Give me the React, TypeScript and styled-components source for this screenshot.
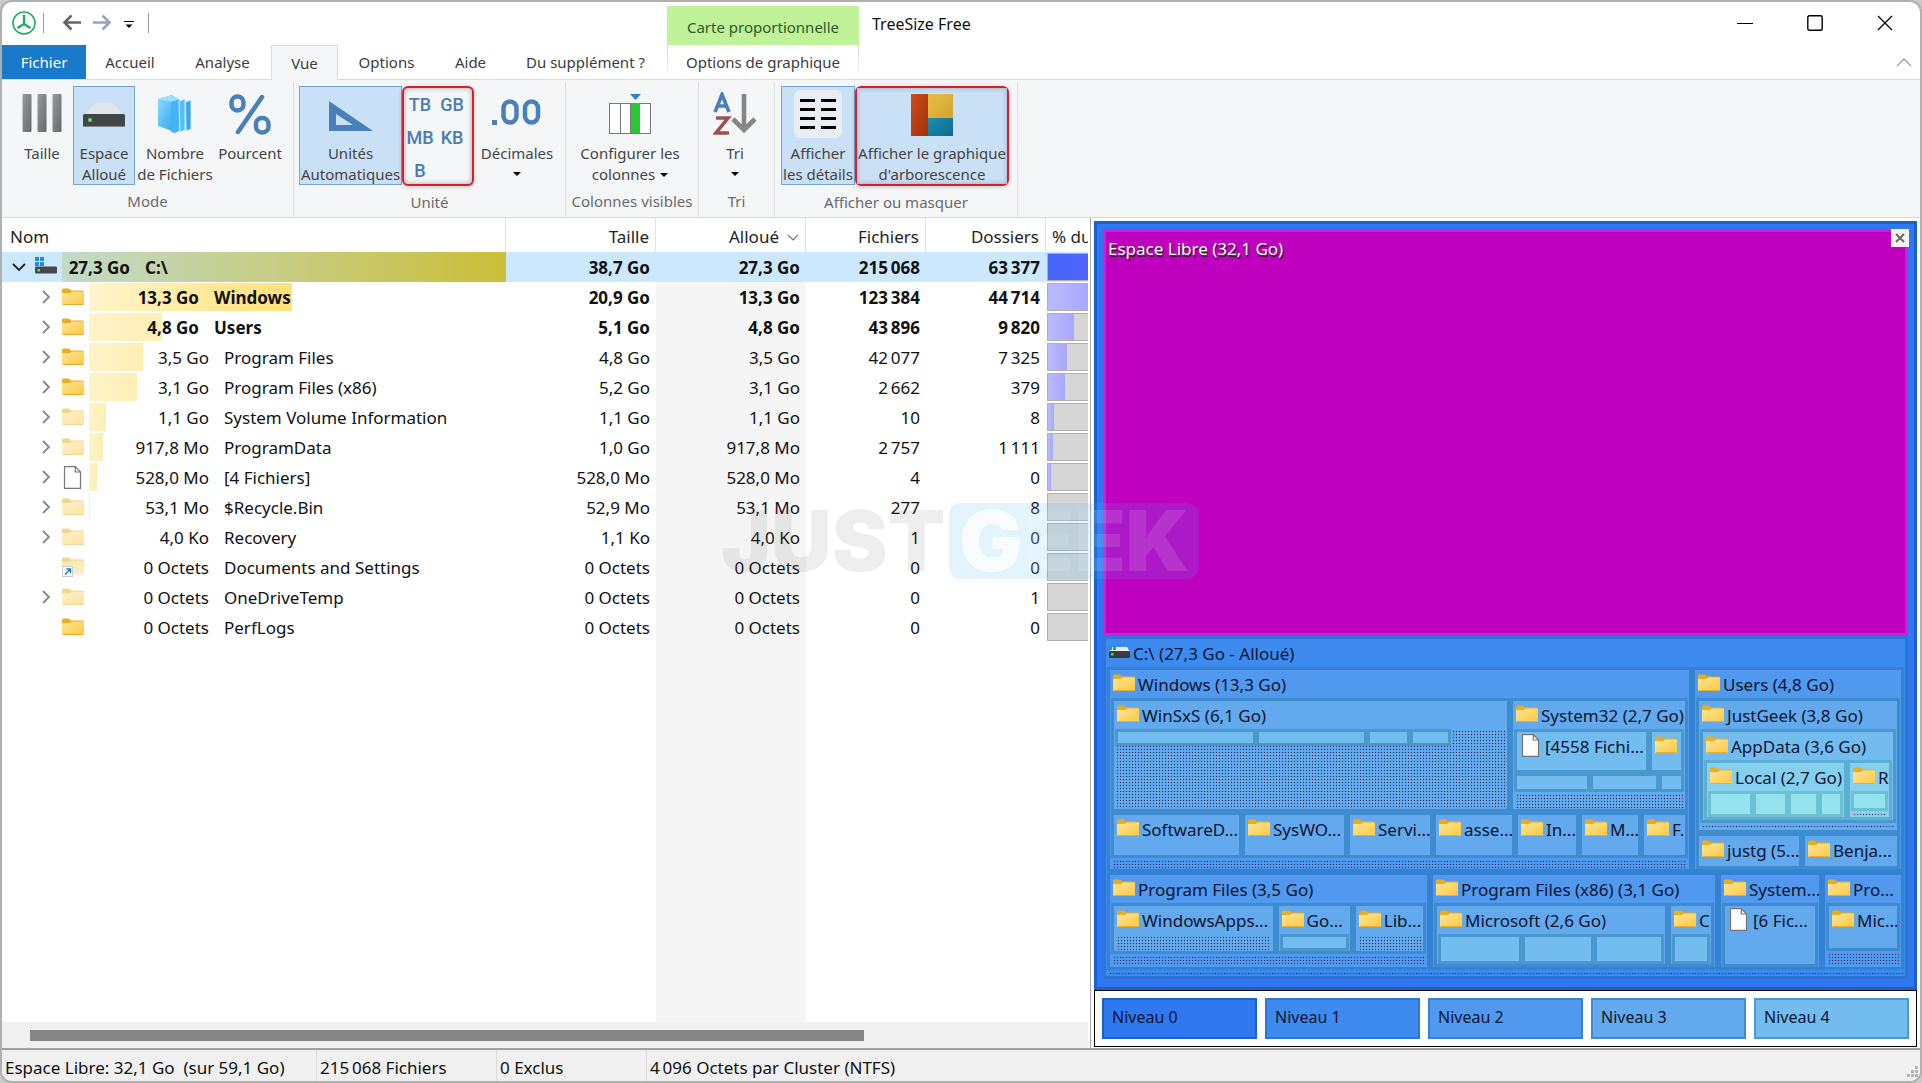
import React from "react";
import styled, { createGlobalStyle, css } from "styled-components";

const FONT = '"Noto Sans", "Open Sans", sans-serif';

const Global = createGlobalStyle`
  *, *::before, *::after { box-sizing: border-box; }
  body { margin: 0; background: #c6cacd; font-family: ${FONT}; color: #111; }
  button { font: inherit; color: inherit; background: none; border: 0; padding: 0; margin: 0; }
  svg { display: block; flex: none; }
`;

/* ---------- window ---------- */

const Window = styled.div`
  position: relative;
  display: flex;
  flex-direction: column;
  min-height: 100vh;
  border: 2px solid #b0b0b0;
  border-radius: 12px;
  background: #fff;
  overflow: hidden;
`;

const Top = styled.header`
  display: grid;
  grid-template-columns: 665px 192px minmax(0, 1fr);
  grid-template-rows: 43px 34px;
  border-bottom: 1px solid #dadbdc;
`;

const QuickAccess = styled.div`
  display: flex;
  align-items: center;
  padding: 0 10px 2px;
`;

const QuickButton = styled.button<{ $narrow?: boolean }>`
  display: grid;
  place-items: center;
  width: ${(p) => (p.$narrow ? 24 : 30)}px;
  height: 24px;
`;

const QuickRule = styled.span<{ $wide?: boolean }>`
  width: 1px;
  height: 20px;
  margin: 0 ${(p) => (p.$wide ? 13 : 7)}px 0 7px;
  background: #9a9a9a;
`;

const ContextTitle = styled.div`
  margin-top: 4px;
  background: #bff299;
  color: #2f5a2b;
  font-size: 15px;
  line-height: 42px;
  text-align: center;
`;

const TitleArea = styled.div`
  display: flex;
  justify-content: space-between;
  padding: 0 0 0 13px;
`;

const Title = styled.h1`
  margin: 0;
  font-size: 16px;
  font-weight: 400;
  line-height: 44px;
`;

const WindowButtons = styled.div`
  display: flex;
`;

const WindowButton = styled.button`
  display: grid;
  place-items: center;
  width: 70px;
  height: 42px;
`;

const Tabs = styled.nav`
  display: flex;
`;

const Tab = styled.button<{ $w: number; $kind?: "file" | "active" }>`
  flex: none;
  width: ${(p) => p.$w}px;
  height: 34px;
  font-size: 15px;
  color: #3c3c3c;
  white-space: nowrap;
  ${(p) => p.$kind === "file" && css`background: #1979ca; color: #fff;`}
  ${(p) =>
    p.$kind === "active" &&
    css`
      height: 35px;
      background: #f4f6f8;
      border: 1px solid #dadbdc;
      border-bottom: 0;
    `}
`;

const ContextTab = styled.button`
  font-size: 15px;
  color: #3c3c3c;
  border: solid #dadbdc;
  border-width: 0 1px;
  border-image: linear-gradient(#cfcfcf, #fff) 1;
`;

const Collapse = styled.button`
  justify-self: end;
  align-self: center;
  margin-right: 8px;
`;

/* ---------- ribbon ---------- */

const Ribbon = styled.div`
  display: flex;
  height: 138px;
  padding-top: 2px;
  background: #f4f6f8;
  border-bottom: 1px solid #d6d7d8;
`;

const Group = styled.section<{ $w: number }>`
  flex: none;
  display: flex;
  flex-direction: column;
  width: ${(p) => p.$w}px;
  border-right: 1px solid #dfe0e2;
`;

const GroupButtons = styled.div<{ $pad?: number }>`
  display: flex;
  height: 105px;
  padding: 4px 0 0 ${(p) => p.$pad || 0}px;
`;

const GroupLabel = styled.div`
  font-size: 15px;
  line-height: 32px;
  text-align: center;
  color: #6a6a6a;
  white-space: nowrap;
`;

const RibbonButton = styled.button<{ $w: number; $on?: boolean }>`
  flex: none;
  display: flex;
  flex-direction: column;
  align-items: center;
  width: ${(p) => p.$w}px;
  height: 99px;
  font-size: 15px;
  line-height: 21px;
  color: #444;
  white-space: nowrap;
  border: 1px solid ${(p) => (p.$on ? "#74a3d6" : "transparent")};
  background: ${(p) => (p.$on ? "#cae0f7" : "transparent")};
`;

const IconSlot = styled.span`
  display: grid;
  place-items: center;
  flex: none;
  height: 56px;
  padding-bottom: 2px;
`;

const Line = styled.span`
  display: flex;
  align-items: center;
  justify-content: center;
  gap: 5px;
  height: 21px;
`;

const Highlight = styled.div<{ $w: number }>`
  flex: none;
  width: ${(p) => p.$w}px;
  height: 100px;
  border: 2px solid #d6202c;
  border-radius: 6px;
  box-shadow: inset 0 0 5px rgba(0, 0, 0, 0.35), 0 1px 4px rgba(0, 0, 0, 0.2);
  & > button { width: 100%; height: 96px; border: 0; box-shadow: inset 0 0 5px rgba(0, 0, 0, 0.25); }
  & > button > ${IconSlot} { height: 55px; }
`;

const Units = styled.div`
  display: grid;
  grid-template-columns: 32px 32px;
  grid-auto-rows: 33px;
  justify-items: center;
  font: 500 18px/30px Roboto, sans-serif;
`;

const UnitButton = styled.button`
  color: #4a7db4;
`;

/* ---------- body ---------- */

const Main = styled.main`
  flex: 1;
  display: grid;
  grid-template-columns: minmax(0, 1089fr) minmax(0, 823fr);
  padding-right: 3px;
  column-gap: 3px;
`;

const Left = styled.section`
  display: flex;
  flex-direction: column;
  min-width: 0;
  padding-right: 2px;
  border-right: 1px solid #a9a9ae;
`;

const ListWrap = styled.div`
  flex: 1;
  display: flex;
  flex-direction: column;
  overflow: hidden;
`;

const List = styled.table`
  width: 100%;
  table-layout: fixed;
  border-collapse: separate;
  border-spacing: 0;
  font-size: 17px;
  line-height: 24px;
  white-space: nowrap;
`;

const Head = styled.th<{ $left?: boolean }>`
  height: 34px;
  padding: 4px 6px 0 ${(p) => (p.$left ? 8 : 6)}px;
  font-size: 17px;
  font-weight: 400;
  color: #222;
  overflow: hidden;
  text-align: ${(p) => (p.$left ? "left" : "right")};
  border-right: 1px solid #e2e2e2;
  &:last-child { border-right: 0; padding: 4px 0 0 6px; }
  svg { display: inline-block; margin-left: 8px; vertical-align: middle; }
`;

const Row = styled.tr<{ $bold?: boolean; $sel?: boolean }>`
  font-weight: ${(p) => (p.$bold ? 700 : 400)};
  background: ${(p) => (p.$sel ? "#cce8ff" : "transparent")};
`;

const Cell = styled.td<{ $sorted?: boolean }>`
  height: 30px;
  padding: 2px 6px 0;
  text-align: right;
  background: ${(p) => (p.$sorted ? "#f5f5f5" : "transparent")};
`;

const NameCell = styled.td`
  height: 30px;
  padding: 0;
`;

const NameFlow = styled.div<{ $child?: boolean }>`
  display: flex;
  align-items: center;
  height: 30px;
  padding-left: ${(p) => (p.$child ? 36 : 10)}px;
`;

const Twisty = styled.span<{ $child?: boolean }>`
  width: ${(p) => (p.$child ? 24 : 22)}px;
  display: flex;
  svg { width: 14px; }
`;

const IconBox = styled.span<{ $child?: boolean }>`
  width: 26px;
  margin-left: ${(p) => (p.$child ? 0 : 1)}px;
  flex: none;
`;

const BarArea = styled.span<{ $root?: boolean }>`
  flex: 1;
  display: grid;
  align-items: center;
  height: ${(p) => (p.$root ? 30 : 28)}px;
  margin-left: 1px;
  & > * { grid-area: 1 / 1; }
`;

const SizeBar = styled.span<{ $root?: boolean }>`
  height: 100%;
  background: ${(p) =>
    p.$root
      ? "linear-gradient(90deg, #c2dacb, #cbbf37)"
      : "linear-gradient(90deg, #fff4c8, #fdeeb4)"};
`;

const WideBar = styled(SizeBar)`
  background: linear-gradient(90deg, #fff5cc, #ffe177);
`;

const NameText = styled.span<{ $size: number }>`
  display: grid;
  grid-template-columns: ${(p) => p.$size}px auto;
  justify-content: start;
  column-gap: 15px;
  padding-top: 2px;
  & > :first-child { text-align: right; }
`;

const PercentCell = styled.td`
  height: 30px;
  padding: 1px 0 1px 1px;
`;

const Percent = styled.div<{ $sel?: boolean }>`
  height: 28px;
  overflow: hidden;
  border: 1px solid #b0b0b0;
  border-right: 0;
  background: #d6d6d6;
  & > span {
    display: block;
    height: 100%;
    background: ${(p) =>
      p.$sel
        ? "linear-gradient(90deg, #4466f8, #5064fb)"
        : "linear-gradient(90deg, #bcbafd, #a9a7fb)"};
  }
`;

const Filler = styled.div`
  flex: 1;
  display: grid;
  grid-template-columns: minmax(0, 1fr) 150px 282px;
  & > span { background: #f5f5f5; }
`;

const ScrollTrack = styled.div`
  height: 26px;
  padding: 8px 224px 8px 28px;
  background: #f0f0f0;
`;

const ScrollThumb = styled.div`
  height: 11px;
  background: #868686;
`;

/* ---------- treemap ---------- */

const FILLS = ["#2f78f0", "#3e8bf0", "#5099ee", "#62a9ee", "#72bcef", "#84d0ee", "#94e2f0"];
const EDGES = ["#1a60cf", "#2b76d6", "#3581d2", "#3f8bd0", "#4b98cf", "#5caed2", "#6cc0d2"];

/* A cell's two 3px borders count towards its share, so they are taken off the part that grows. */
const CELL_EDGES = 6;

const Right = styled.section`
  display: flex;
  flex-direction: column;
  min-width: 0;
  padding: 3px 0 1px;
`;

const MapRoot = styled.div`
  position: relative;
  flex: 1;
  display: flex;
  flex-direction: column;
  padding: 5px 6px 8px;
  border: 3px solid ${EDGES[0]};
  background: ${FILLS[0]};
`;

const CloseMap = styled.button`
  position: absolute;
  top: 5px;
  right: 5px;
  display: grid;
  place-items: center;
  width: 18px;
  height: 18px;
  background: #f3f3f3;
`;

const FreeSpace = styled.div`
  flex: 395 1 0;
  padding: 4px 2px 2px;
  border: 3px solid #cf1fdc;
  background: #bf00bf;
  color: #fff;
  font-size: 17px;
  line-height: 26px;
  text-shadow: 1px 2px 1px #222;
`;

const MapCell = styled.div<{ $level: number; $flex: number }>`
  flex: ${(p) => Math.max(1, p.$flex - CELL_EDGES)} 1 0;
  display: flex;
  flex-direction: column;
  min-width: 0;
  min-height: 0;
  overflow: hidden;
  border: 3px solid ${(p) => EDGES[p.$level]};
  background: ${(p) => FILLS[p.$level]};
`;

const MapLabel = styled.div`
  flex: none;
  display: flex;
  align-items: center;
  gap: 3px;
  height: 28px;
  padding: 2px 0 0 3px;
  overflow: hidden;
  color: #0b1530;
  font-size: 17px;
  line-height: 28px;
  white-space: nowrap;
  svg { margin-top: -4px; }
`;

const MapBody = styled.div`
  flex: 1;
  display: flex;
  flex-direction: column;
  min-height: 0;
  padding: 0 1px;
`;

const MapRow = styled.div<{ $flex: number; $end?: number }>`
  flex: ${(p) => p.$flex} 1 0;
  display: flex;
  min-height: 0;
  padding-right: ${(p) => p.$end || 0}%;
`;

/* One dark pixel in each 3px tile. */
const dots = css`
  background-image: conic-gradient(from 90deg at 2px 2px, #0c1c3c 90deg, transparent 0);
  background-size: 3px 3px;
`;

const Dots = styled.div<{ $flex: number }>`
  flex: ${(p) => p.$flex} 1 0;
  margin: 1px;
  min-height: 0;
  ${dots}
`;

const DotBody = styled(MapBody)`
  margin: 0 1px;
  padding: 0;
  ${dots}
`;

const Legend = styled.div`
  display: flex;
  gap: 8px;
  padding: 7px;
  border: 1px solid #000;
  background: #fff;
`;

const LegendItem = styled.div<{ $level: number }>`
  flex: 1;
  height: 41px;
  padding-left: 8px;
  border: 2px solid ${(p) => EDGES[p.$level]};
  background: ${(p) => FILLS[p.$level]};
  color: #0b1530;
  font-size: 16px;
  line-height: 34px;
`;

/* ---------- status ---------- */

const Status = styled.footer`
  display: flex;
  height: 33px;
  border-top: 2px solid #a0a0a0;
  background: #f0f0f0;
  font-size: 17px;
  line-height: 35px;
  white-space: pre;
`;

const StatusItem = styled.div<{ $w?: number }>`
  flex: ${(p) => (p.$w ? "none" : "1")};
  width: ${(p) => (p.$w ? `${p.$w}px` : "auto")};
  padding-left: 3px;
  border-right: 1px solid #dcdcdc;
  &:last-of-type { border: 0; }
`;

const Grip = styled.span`
  align-self: flex-end;
  padding: 0 1px 3px 0;
`;

const Watermark = styled.div`
  position: absolute;
  left: 50%;
  top: 501px;
  display: flex;
  align-items: center;
  gap: 4px;
  margin-left: -240px;
  height: 76px;
  font: 900 84px/76px Inter, sans-serif;
  color: rgba(90, 90, 90, 0.1);
  pointer-events: none;
`;

const WatermarkBox = styled.span`
  padding: 0 10px;
  border-radius: 12px;
  background: rgba(60, 180, 240, 0.14);
  color: rgba(255, 255, 255, 0.75);
  span { color: rgba(255, 255, 255, 0.12); }
`;

/* ---------- icons ---------- */

const Folder = ({ faded }: { faded?: boolean }) => (
  <svg width="22" height="18" viewBox="0 0 22 18" opacity={faded ? 0.5 : 1}>
    <defs>
      <linearGradient id="folder" x1="0" y1="0" x2="1" y2="1">
        <stop offset="0" stopColor="#ffe596" />
        <stop offset="1" stopColor="#fdc842" />
      </linearGradient>
    </defs>
    <path d="M0 2a1.500 1.500 0 0 1 1.500-1.500H7l2 2h11.500a1.500 1.500 0 0 1 1.500 1.500V8H0z" fill="#e9ad22" />
    <path d="M0 5h8l2-1.500h12V16a1 1 0 0 1-1 1H1a1 1 0 0 1-1-1z" fill="url(#folder)" />
    <path d="M1 16.500h20" stroke="#e2ac35" />
  </svg>
);

const ShortcutFolder = () => (
  <svg width="22" height="20" viewBox="0 0 22 20">
    <g opacity=".5">
      <path d="M0 2a1.500 1.500 0 0 1 1.500-1.500H7l2 2h11.500a1.500 1.500 0 0 1 1.500 1.500V8H0z" fill="#e9ad22" />
      <path d="M0 5h8l2-1.500h12V17H0z" fill="#fdd973" />
    </g>
    <rect x="0.500" y="9.500" width="10" height="10" fill="#fff" stroke="#ccc" />
    <path d="M3 17.500l5-5M4.500 12H8.500V16" stroke="#1a7fc8" strokeWidth="1.500" fill="none" />
  </svg>
);

const Page = () => (
  <svg width="22" height="23" viewBox="0 0 22 23">
    <path d="M2.500.7h10.800L18.500 6v16.300h-16z" fill="#fdfdfd" stroke="#777" strokeWidth="1.200" />
    <path d="M13.300.7V6h5.200" fill="none" stroke="#777" strokeWidth="1.200" />
  </svg>
);

const Drive = () => (
  <svg width="22" height="20" viewBox="0 0 22 20">
    <path d="M0 0h4v4H0zM5 0h4v4H5zM0 5h4v4H0zM5 5h4v4H5z" fill="#2090dc" />
    <path d="M11 7.500h7l3 2.500H9z" fill="#dbe6ee" />
    <rect y="9.500" width="22" height="7" rx="1" fill="#45484b" />
    <rect x="2.500" y="12" width="2.500" height="2.500" fill="#4fe06a" />
  </svg>
);

const MapDrive = () => (
  <svg width="21" height="16" viewBox="0 0 21 16">
    <path d="M3 3h15l3 5H0z" fill="#e8edf2" />
    <path d="M0 2h3v4H0zM4 0h3v6H4z" fill="#159bd8" />
    <rect y="7" width="21" height="7" rx="1" fill="#3a3d40" />
    <rect x="2" y="9" width="2.500" height="2.500" fill="#4fe06a" />
  </svg>
);

const Chevron = ({ open }: { open?: boolean }) => (
  <svg width="14" height="14" viewBox="0 0 14 14" fill="none" stroke={open ? "#222" : "#8a8a8a"} strokeWidth="1.900">
    <path d={open ? "M1 4l6 6 6-6" : "M5 1l6 6-6 6"} />
  </svg>
);

const Caret = () => (
  <svg width="8" height="4" viewBox="0 0 8 4"><path d="M0 0h8L4 4z" fill="#000" /></svg>
);

const Logo = () => (
  <svg width="24" height="24" viewBox="0 0 24 24" fill="none" stroke="#22ab62">
    <circle cx="12" cy="12" r="11" strokeWidth="1.600" />
    <path d="M12 4v9M12 13l-6.500 4M12 13l6.500 4" strokeWidth="2.400" />
  </svg>
);

const Arrow = ({ color, right }: { color: string; right?: boolean }) => (
  <svg width="20" height="17" viewBox="0 0 20 17" fill="none" stroke={color} strokeWidth="2.600">
    <path d={right ? "M1 8.500h16.500M10.500 1.500l7 7-7 7" : "M19 8.500H2.500M9.500 1.500l-7 7 7 7"} />
  </svg>
);

const BarsIcon = () => (
  <svg width="40" height="40" viewBox="0 0 40 40">
    <defs>
      <linearGradient id="bars" x2="1" y2="1"><stop stopColor="#9a9b9d" /><stop offset="1" stopColor="#66686b" /></linearGradient>
    </defs>
    {[0, 15, 30].map((x) => <rect key={x} x={x + 0.5} width="9" height="38" rx="1" fill="url(#bars)" />)}
  </svg>
);

const DriveIcon = () => (
  <svg width="42" height="38" viewBox="0 0 42 38">
    <path d="M9 11q2-3 12-3t12 3l6 9H3z" fill="#e2e6ea" />
    <rect y="19" width="42" height="13" rx="1.500" fill="#434648" />
    <path d="M1 31.500h40" stroke="#888" />
    <circle cx="7" cy="25" r="2" fill="#5fe27a" />
  </svg>
);

const BooksIcon = () => (
  <svg width="34" height="40" viewBox="0 0 34 40">
    <defs>
      <linearGradient id="book" x2="1" y2="1"><stop stopColor="#8fdcff" /><stop offset="1" stopColor="#2fa6ee" /></linearGradient>
    </defs>
    <path d="M0 5L14 1l3 3v34l-17-6z" fill="url(#book)" />
    <path d="M13 8l8-3v32l-4 2-4-1z" fill="#45b4f2" />
    <path d="M21 7l6-2v31l-5 2z" fill="#56bdf5" stroke="#c5ebff" />
    <path d="M27.500 8l5.500-2v29l-5 2z" fill="#3da6e6" stroke="#c5ebff" />
    <path d="M14 1l7 4-8 3-13-3z" fill="#9be0ff" />
  </svg>
);

const PercentIcon = () => (
  <svg width="42" height="41" viewBox="0 0 42 41" fill="none" stroke="#4a7fb8" strokeWidth="4.500">
    <rect x="2.500" y="2.500" width="12" height="14" rx="6" />
    <rect x="27" y="24" width="12.500" height="14.500" rx="6" />
    <path d="M33 3L9 38" strokeLinecap="round" />
  </svg>
);

const SquareIcon = () => (
  <svg width="46" height="36" viewBox="0 0 46 36">
    <path d="M1 5v30h44zM8 18l17 11H8z" fill="#4a80ba" fillRule="evenodd" />
  </svg>
);

const DecimalsIcon = () => (
  <svg width="50" height="30" viewBox="0 0 50 30" fill="none" stroke="#4a80ba" strokeWidth="4.500">
    <rect x="11.500" y="2.500" width="13" height="21" rx="6.500" />
    <rect x="33" y="2.500" width="13" height="21" rx="6.500" />
    <rect x="0" y="21" width="5" height="5" fill="#4a80ba" stroke="none" />
  </svg>
);

const ColumnsIcon = () => (
  <svg width="42" height="40" viewBox="0 0 42 40">
    <path d="M21 0h11l-5.500 6z" fill="#2f80c8" />
    <rect x=".5" y="9.500" width="41" height="30" fill="#fff" stroke="#777" />
    <path d="M11.500 10v29M30.500 10v29M21.500 10v29" stroke="#777" />
    <rect x="22" y="9" width="9" height="30" fill="#27c832" />
  </svg>
);

const SortIcon = () => (
  <svg width="44" height="44" viewBox="0 0 44 44" fill="none" strokeWidth="3.600">
    <path d="M2 20L9 2.500 16 20M4.500 14h9" stroke="#4a7fb8" />
    <path d="M3 26h12L3 41h13" stroke="#9c5252" />
    <path d="M31 2v34M20 27l11 11 11-11" stroke="#868686" strokeWidth="4.600" />
  </svg>
);

const DetailsIcon = () => (
  <svg width="48" height="48" viewBox="0 0 48 48">
    <rect width="48" height="48" rx="6" fill="#e9eef5" />
    <path d="M6 10.500h15M27 10.500h15M6 19.500h15M27 19.500h15M6 28.500h15M27 28.500h15M6 37.500h15M27 37.500h15" stroke="#000" strokeWidth="3" />
  </svg>
);

const TreemapIcon = () => (
  <svg width="42" height="42" viewBox="0 0 42 42">
    <defs>
      <linearGradient id="tmr" x2="1" y2="1"><stop stopColor="#cf4a1c" /><stop offset="1" stopColor="#a3300a" /></linearGradient>
      <linearGradient id="tmy" x2="1" y2="1"><stop stopColor="#e8bc48" /><stop offset="1" stopColor="#d3a52c" /></linearGradient>
      <linearGradient id="tmb" x2="1" y2="1"><stop stopColor="#1d8fae" /><stop offset="1" stopColor="#0d6a90" /></linearGradient>
    </defs>
    <rect width="17" height="42" fill="url(#tmr)" />
    <rect x="17" width="25" height="24" fill="url(#tmy)" />
    <rect x="17" y="24" width="25" height="18" fill="url(#tmb)" />
  </svg>
);

/* ---------- data ---------- */

type Item = {
  name: string;
  size: string;
  total: string;
  files: string;
  dirs: string;
  share: number;
  icon?: "root" | "folder" | "faded" | "page" | "link";
  leaf?: boolean;
};

const T = "\u2009";

const items: Item[] = [
  { name: "C:\\", size: "27,3 Go", total: "38,7 Go", files: `215${T}068`, dirs: `63${T}377`, share: 100, icon: "root" },
  { name: "Windows", size: "13,3 Go", total: "20,9 Go", files: `123${T}384`, dirs: `44${T}714`, share: 48.7 },
  { name: "Users", size: "4,8 Go", total: "5,1 Go", files: `43${T}896`, dirs: `9${T}820`, share: 17.6 },
  { name: "Program Files", size: "3,5 Go", total: "4,8 Go", files: `42${T}077`, dirs: `7${T}325`, share: 12.9 },
  { name: "Program Files (x86)", size: "3,1 Go", total: "5,2 Go", files: `2${T}662`, dirs: "379", share: 11.4 },
  { name: "System Volume Information", size: "1,1 Go", total: "1,1 Go", files: "10", dirs: "8", share: 4, icon: "faded" },
  { name: "ProgramData", size: "917,8 Mo", total: "1,0 Go", files: `2${T}757`, dirs: `1${T}111`, share: 3.3, icon: "faded" },
  { name: "[4 Fichiers]", size: "528,0 Mo", total: "528,0 Mo", files: "4", dirs: "0", share: 1.9, icon: "page" },
  { name: "$Recycle.Bin", size: "53,1 Mo", total: "52,9 Mo", files: "277", dirs: "8", share: 0.2, icon: "faded" },
  { name: "Recovery", size: "4,0 Ko", total: "1,1 Ko", files: "1", dirs: "0", share: 0, icon: "faded" },
  { name: "Documents and Settings", size: "0 Octets", total: "0 Octets", files: "0", dirs: "0", share: 0, icon: "link", leaf: true },
  { name: "OneDriveTemp", size: "0 Octets", total: "0 Octets", files: "0", dirs: "1", share: 0, icon: "faded" },
  { name: "PerfLogs", size: "0 Octets", total: "0 Octets", files: "0", dirs: "0", share: 0, leaf: true },
];

const rowIcon = (kind: Item["icon"]) => {
  if (kind === "root") return <Drive />;
  if (kind === "page") return <Page />;
  if (kind === "link") return <ShortcutFolder />;
  return <Folder faded={kind === "faded"} />;
};

const ItemRow = ({ item, index }: { item: Item; index: number }) => {
  const root = index === 0;
  const bold = index < 3;
  const Bar = index === 1 ? WideBar : SizeBar;
  return (
    <Row $bold={bold} $sel={root}>
      <NameCell>
        <NameFlow $child={!root}>
          <Twisty $child={!root}>{!item.leaf && <Chevron open={root} />}</Twisty>
          <IconBox $child={!root}>{rowIcon(item.icon)}</IconBox>
          <BarArea $root={root}>
            <Bar $root={root} style={{ width: `${item.share}%` }} />
            <NameText $size={root ? 68 : bold ? 110 : 120}>
              <span>{item.size}</span>
              <span>{item.name}</span>
            </NameText>
          </BarArea>
        </NameFlow>
      </NameCell>
      <Cell>{item.total}</Cell>
      <Cell $sorted={!root}>{item.size}</Cell>
      <Cell>{item.files}</Cell>
      <Cell>{item.dirs}</Cell>
      <PercentCell>
        <Percent $sel={root}>
          <span style={{ width: `${Math.min(100, item.share * 3.7)}%` }} />
        </Percent>
      </PercentCell>
    </Row>
  );
};

/* ---------- treemap parts ---------- */

type NodeProps = {
  level: number;
  flex: number;
  label?: string;
  page?: boolean;
  dotted?: boolean;
  children?: React.ReactNode;
};

const Node = ({ level, flex, label, page, dotted, children }: NodeProps) => {
  const Body = dotted ? DotBody : MapBody;
  return (
    <MapCell $level={level} $flex={flex}>
      {label && (
        <MapLabel>
          {page ? <Page /> : level === 1 ? <MapDrive /> : <Folder />}
          <span>{label}</span>
        </MapLabel>
      )}
      {children && <Body>{children}</Body>}
    </MapCell>
  );
};

const Treemap = () => (
  <Node level={1} flex={343} label="C:\ (27,3 Go - Alloué)">
    <MapRow $flex={205}>
      <Node level={2} flex={585} label="Windows (13,3 Go)">
        <MapRow $flex={113}>
          <Node level={3} flex={399} label="WinSxS (6,1 Go)" dotted>
            <MapRow $flex={17} $end={14}>
              <MapCell $level={4} $flex={140} />
              <MapCell $level={4} $flex={111} />
              <MapCell $level={4} $flex={43} />
              <MapCell $level={4} $flex={41} />
            </MapRow>
            <MapRow $flex={61} />
          </Node>
          <Node level={3} flex={178} label="System32 (2,7 Go)">
            <MapRow $flex={43}>
              <Node level={4} flex={136} label="[4558 Fichi..." page />
              <Node level={4} flex={35} label=" " />
            </MapRow>
            <MapRow $flex={19}>
              <MapCell $level={4} $flex={76} />
              <MapCell $level={4} $flex={70} />
              <MapCell $level={4} $flex={25} />
            </MapRow>
            <Dots $flex={14} />
          </Node>
        </MapRow>
        <MapRow $flex={46}>
          <Node level={3} flex={131} label="SoftwareD..." />
          <Node level={3} flex={105} label="SysWO..." />
          <Node level={3} flex={86} label="Servi..." />
          <Node level={3} flex={82} label="asse..." />
          <Node level={3} flex={64} label="In..." />
          <Node level={3} flex={62} label="M..." />
          <Node level={3} flex={47} label="F." />
        </MapRow>
        <Dots $flex={9} />
      </Node>
      <Node level={2} flex={212} label="Users (4,8 Go)">
        <MapRow $flex={134}>
          <Node level={3} flex={204} label="JustGeek (3,8 Go)">
            <MapRow $flex={92}>
              <Node level={4} flex={196} label="AppData (3,6 Go)">
                <MapRow $flex={57}>
                  <Node level={5} flex={143} label="Local (2,7 Go)">
                    <MapRow $flex={22}>
                      <MapCell $level={6} $flex={45} />
                      <MapCell $level={6} $flex={35} />
                      <MapCell $level={6} $flex={31} />
                      <MapCell $level={6} $flex={24} />
                    </MapRow>
                  </Node>
                  <Node level={5} flex={45} label="R">
                    <MapRow $flex={17}>
                      <MapCell $level={6} $flex={39} />
                    </MapRow>
                    <Dots $flex={3} />
                  </Node>
                </MapRow>
              </Node>
            </MapRow>
            <Dots $flex={5} />
          </Node>
        </MapRow>
        <MapRow $flex={36}>
          <Node level={3} flex={106} label="justg (5..." />
          <Node level={3} flex={98} label="Benja..." />
        </MapRow>
      </Node>
    </MapRow>
    <MapRow $flex={98}>
      <Node level={2} flex={323} label="Program Files (3,5 Go)">
        <MapRow $flex={51}>
          <Node level={3} flex={164} label="WindowsApps..."><Dots $flex={1} /></Node>
          <Node level={3} flex={77} label="Go...">
            <MapRow $flex={1}><MapCell $level={4} $flex={1} /></MapRow>
          </Node>
          <Node level={3} flex={73} label="Lib..."><Dots $flex={1} /></Node>
        </MapRow>
        <Dots $flex={11} />
      </Node>
      <Node level={2} flex={288} label="Program Files (x86) (3,1 Go)">
        <MapRow $flex={1}>
          <Node level={3} flex={234} label="Microsoft (2,6 Go)">
            <MapRow $flex={1}>
              <MapCell $level={4} $flex={84} />
              <MapCell $level={4} $flex={73} />
              <MapCell $level={4} $flex={70} />
            </MapRow>
          </Node>
          <Node level={3} flex={46} label="C">
            <MapRow $flex={1}><MapCell $level={4} $flex={1} /></MapRow>
          </Node>
        </MapRow>
      </Node>
      <Node level={2} flex={104} label="System...">
        <MapRow $flex={1}><Node level={3} flex={1} label="[6 Fic..." page /></MapRow>
      </Node>
      <Node level={2} flex={82} label="Pro...">
        <MapRow $flex={49}><Node level={3} flex={1} label="Mic..." /></MapRow>
        <Dots $flex={14} />
      </Node>
    </MapRow>
    <Dots $flex={4} />
  </Node>
);

/* ---------- app ---------- */

export default function App() {
  return (
    <>
      <Global />
      <Window>
        <Top>
          <QuickAccess>
            <Logo />
            <QuickRule $wide />
            <QuickButton aria-label="Précédent"><Arrow color="#666" /></QuickButton>
            <QuickButton aria-label="Suivant"><Arrow color="#9aa0bd" right /></QuickButton>
            <QuickButton $narrow aria-label="Personnaliser">
              <svg width="10" height="12" viewBox="0 0 10 12"><path d="M0 4.500h10" stroke="#000" /><path d="M1.500 7.500h7L5 11z" /></svg>
            </QuickButton>
            <QuickRule />
          </QuickAccess>
          <ContextTitle>Carte proportionnelle</ContextTitle>
          <TitleArea>
            <Title>TreeSize Free</Title>
            <WindowButtons>
              <WindowButton aria-label="Réduire"><svg width="16" height="16"><path d="M0 8.500h16" stroke="#000" /></svg></WindowButton>
              <WindowButton aria-label="Agrandir"><svg width="16" height="16"><rect x=".8" y=".8" width="14.400" height="14.400" rx="1.500" fill="none" stroke="#000" strokeWidth="1.400" /></svg></WindowButton>
              <WindowButton aria-label="Fermer"><svg width="16" height="16"><path d="M1 1l14 14M15 1L1 15" stroke="#000" strokeWidth="1.300" /></svg></WindowButton>
            </WindowButtons>
          </TitleArea>
          <Tabs>
            <Tab $w={84} $kind="file">Fichier</Tab>
            <Tab $w={88}>Accueil</Tab>
            <Tab $w={97}>Analyse</Tab>
            <Tab $w={67} $kind="active">Vue</Tab>
            <Tab $w={97}>Options</Tab>
            <Tab $w={71}>Aide</Tab>
            <Tab $w={159}>Du supplément ?</Tab>
          </Tabs>
          <ContextTab>Options de graphique</ContextTab>
          <Collapse aria-label="Réduire le ruban"><svg width="16" height="10"><path d="M1 9l7-7 7 7" fill="none" stroke="#aaa" strokeWidth="1.600" /></svg></Collapse>
        </Top>

        <Ribbon>
          <Group $w={292}>
            <GroupButtons $pad={9}>
              <RibbonButton $w={62}><IconSlot><BarsIcon /></IconSlot><Line>Taille</Line></RibbonButton>
              <RibbonButton $w={62} $on><IconSlot><DriveIcon /></IconSlot><Line>Espace</Line><Line>Alloué</Line></RibbonButton>
              <RibbonButton $w={80}><IconSlot><BooksIcon /></IconSlot><Line>Nombre</Line><Line>de Fichiers</Line></RibbonButton>
              <RibbonButton $w={70}><IconSlot><PercentIcon /></IconSlot><Line>Pourcent</Line></RibbonButton>
            </GroupButtons>
            <GroupLabel>Mode</GroupLabel>
          </Group>
          <Group $w={272}>
            <GroupButtons $pad={5}>
              <RibbonButton $w={103} $on><IconSlot><SquareIcon /></IconSlot><Line>Unités</Line><Line>Automatiques</Line></RibbonButton>
              <Highlight $w={72}>
                <Units>
                  {["TB", "GB", "MB", "KB", "B"].map((u) => <UnitButton key={u}>{u}</UnitButton>)}
                </Units>
              </Highlight>
              <RibbonButton $w={86}><IconSlot><DecimalsIcon /></IconSlot><Line>Décimales</Line><Line><Caret /></Line></RibbonButton>
            </GroupButtons>
            <GroupLabel>Unité</GroupLabel>
          </Group>
          <Group $w={133}>
            <GroupButtons $pad={2}>
              <RibbonButton $w={124}><IconSlot><ColumnsIcon /></IconSlot><Line>Configurer les</Line><Line>colonnes <Caret /></Line></RibbonButton>
            </GroupButtons>
            <GroupLabel>Colonnes visibles</GroupLabel>
          </Group>
          <Group $w={76}>
            <GroupButtons $pad={2}>
              <RibbonButton $w={68}><IconSlot><SortIcon /></IconSlot><Line>Tri</Line><Line><Caret /></Line></RibbonButton>
            </GroupButtons>
            <GroupLabel>Tri</GroupLabel>
          </Group>
          <Group $w={243}>
            <GroupButtons $pad={6}>
              <RibbonButton $w={74} $on><IconSlot><DetailsIcon /></IconSlot><Line>Afficher</Line><Line>les détails</Line></RibbonButton>
              <Highlight $w={154}>
                <RibbonButton $w={150} $on><IconSlot><TreemapIcon /></IconSlot><Line>Afficher le graphique</Line><Line>d'arborescence</Line></RibbonButton>
              </Highlight>
            </GroupButtons>
            <GroupLabel>Afficher ou masquer</GroupLabel>
          </Group>
        </Ribbon>

        <Main>
          <Left>
            <ListWrap>
              <List>
                <colgroup>
                  <col />
                  <col style={{ width: 150 }} />
                  <col style={{ width: 150 }} />
                  <col style={{ width: 120 }} />
                  <col style={{ width: 120 }} />
                  <col style={{ width: 42 }} />
                </colgroup>
                <thead>
                  <tr>
                    <Head $left>Nom</Head>
                    <Head>Taille</Head>
                    <Head>Alloué<svg width="12" height="8"><path d="M1 1l5 5 5-5" fill="none" stroke="#777" strokeWidth="1.200" /></svg></Head>
                    <Head>Fichiers</Head>
                    <Head>Dossiers</Head>
                    <Head $left>% du</Head>
                  </tr>
                </thead>
                <tbody>
                  {items.map((item, i) => <ItemRow key={item.name} item={item} index={i} />)}
                </tbody>
              </List>
              <Filler><i /><span /><i /></Filler>
            </ListWrap>
            <ScrollTrack><ScrollThumb /></ScrollTrack>
          </Left>

          <Right>
            <MapRoot>
              <FreeSpace>Espace Libre (32,1 Go)</FreeSpace>
              <Treemap />
              <CloseMap aria-label="Fermer le graphique">
                <svg width="10" height="10"><path d="M1 1l8 8M9 1L1 9" stroke="#666" strokeWidth="2" /></svg>
              </CloseMap>
            </MapRoot>
            <Legend>
              {[0, 1, 2, 3, 4].map((n) => <LegendItem key={n} $level={n}>Niveau {n}</LegendItem>)}
            </Legend>
          </Right>
        </Main>

        <Status>
          <StatusItem $w={315}>Espace Libre: 32,1 Go  (sur 59,1 Go)</StatusItem>
          <StatusItem $w={180}>{`215${T}068 Fichiers`}</StatusItem>
          <StatusItem $w={150}>0 Exclus</StatusItem>
          <StatusItem>{`4${T}096 Octets par Cluster (NTFS)`}</StatusItem>
          <Grip>
            <svg width="12" height="12" fill="#b5b5b5"><path d="M8 0h3v3H8zM4 4h3v3H4zM8 4h3v3H8zM0 8h3v3H0zM4 8h3v3H4zM8 8h3v3H8z" /></svg>
          </Grip>
        </Status>

        <Watermark aria-hidden="true">
          JUST
          <WatermarkBox>G<span>EEK</span></WatermarkBox>
        </Watermark>
      </Window>
    </>
  );
}
